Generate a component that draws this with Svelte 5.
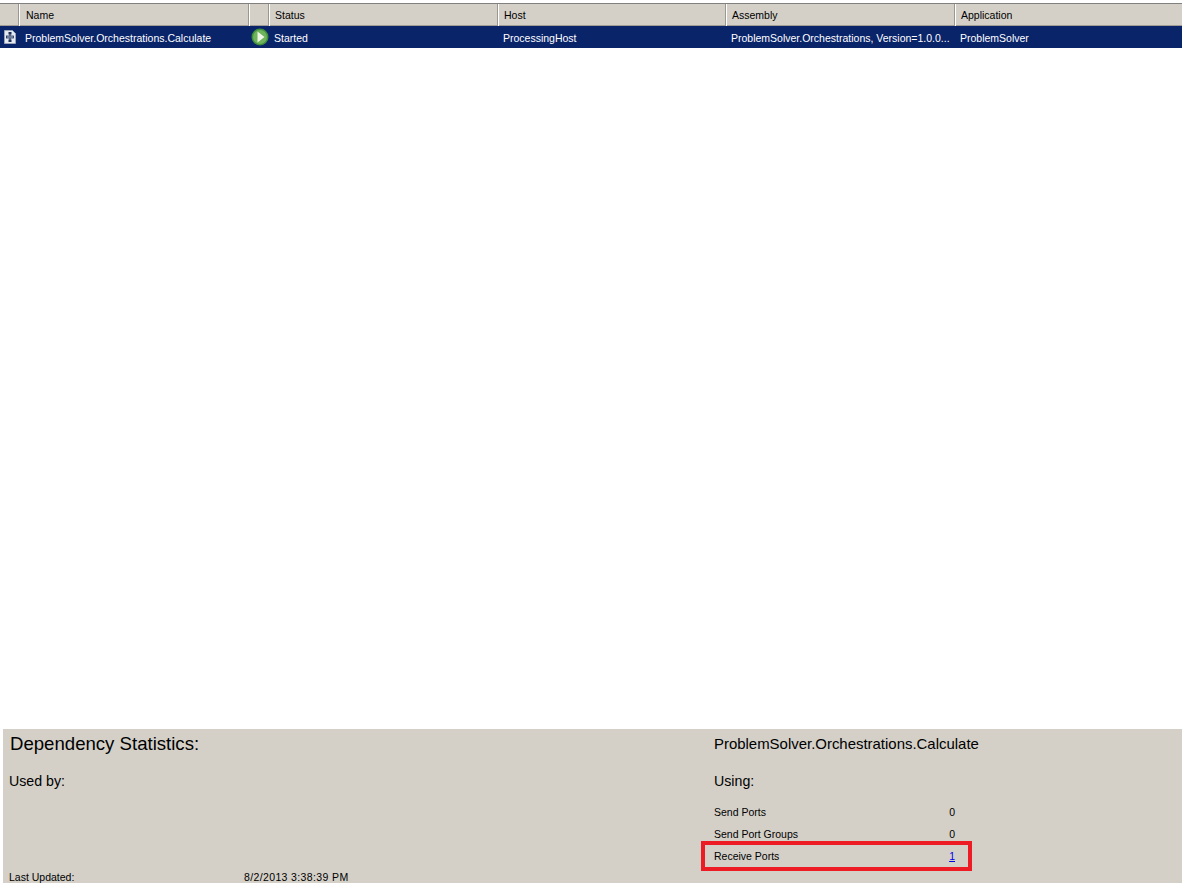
<script>
  const columns = ['', 'Name', '', 'Status', 'Host', 'Assembly', 'Application'];
  const usingStats = [
    { label: 'Send Ports', value: 0 },
    { label: 'Send Port Groups', value: 0 },
    { label: 'Receive Ports', value: 1, link: true }
  ];
</script>

<div class="console">
  <section class="list">
    <div class="head cols">
      {#each columns as col}
        <div class="col">{col}</div>
      {/each}
    </div>
    <div class="row cols">
      <div class="cell icon">
        <svg width="15" height="16" viewBox="0 0 15 16">
          <path d="M3.5 1.5H11.5L14.5 4.5V14.5H3.5Z" fill="#e4e9f2" stroke="#9aa4b8" />
          <path d="M9 3V13" stroke="#1c2c50" />
          <rect x="5.5" y="7" width="7" height="2" fill="#a9b5cc" stroke="#1c2c50" stroke-width=".8" />
          <rect x="7.5" y="3" width="3" height="2.5" fill="#1c2c50" />
          <rect x="7.5" y="10.5" width="3" height="2.5" fill="#1c2c50" />
        </svg>
      </div>
      <div class="cell">ProblemSolver.Orchestrations.Calculate</div>
      <div class="cell icon">
        <svg width="18" height="18" viewBox="0 0 18 18">
          <circle cx="9" cy="9" r="8.5" fill="#3f8f3a" />
          <circle cx="9" cy="9" r="7" fill="#6fb35c" />
          <path d="M6.5 3.5L13.5 9L6.5 14.5Z" fill="#eef5e6" />
        </svg>
      </div>
      <div class="cell">Started</div>
      <div class="cell">ProcessingHost</div>
      <div class="cell">ProblemSolver.Orchestrations, Version=1.0.0...</div>
      <div class="cell">ProblemSolver</div>
    </div>
  </section>

  <section class="stats">
    <div class="side">
      <h2>Dependency Statistics:</h2>
      <h3>Used by:</h3>
      <div class="updated">
        <span>Last Updated:</span>
        <span class="date">8/2/2013 3:38:39 PM</span>
      </div>
    </div>
    <div class="side using">
      <p class="title">ProblemSolver.Orchestrations.Calculate</p>
      <h3>Using:</h3>
      <ul>
        {#each usingStats as stat}
          <li class:marked={stat.link}>
            <span>{stat.label}</span>
            {#if stat.link}
              <a href="#receive">{stat.value}</a>
            {:else}
              <span>{stat.value}</span>
            {/if}
          </li>
        {/each}
      </ul>
    </div>
  </section>
</div>

<style>
  :global(body) {
    margin: 0;
    background: #fff;
  }

  .console {
    height: 883px;
    overflow: hidden;
    display: flex;
    flex-direction: column;
    font-family: "Liberation Sans", Arial, sans-serif;
    font-size: 10.5px;
    color: #000;
  }

  .list {
    flex: 1;
    padding-top: 3px;
  }

  .cols {
    display: grid;
    grid-template-columns: 20px 230px 20px 229px 228px 229px 1fr;
  }

  .head {
    height: 23px;
    box-sizing: border-box;
    background: #d4d0c8;
    border-top: 1px solid #808080;
    border-bottom: 1px solid #a09c94;
  }

  .col {
    line-height: 22px;
    padding-left: 5px;
    border-right: 1px solid #fff;
    box-shadow: inset -1px 0 0 #9a978f;
  }

  .col:nth-child(2) {
    padding-left: 6px;
  }

  .col:last-child {
    border-right: 0;
    box-shadow: none;
  }

  .row {
    height: 22px;
    background: #0a246a;
    color: #fff;
  }

  .cell {
    line-height: 24px;
    padding-left: 4px;
    white-space: nowrap;
    overflow: hidden;
  }

  .cell:nth-child(2) {
    padding-left: 5px;
  }

  .icon {
    padding-left: 1px;
    display: flex;
    align-items: center;
  }

  .stats {
    margin-left: 3px;
    height: 154px;
    background: #d4d0c8;
    display: grid;
    grid-template-columns: 705px 1fr;
    padding: 6px 0 0 6px;
    box-sizing: border-box;
  }

  h2 {
    margin: 0;
    padding-left: 1px;
    font-size: 18.6px;
    font-weight: 400;
    line-height: 17px;
    padding-bottom: 2px;
  }

  h3 {
    margin: 19px 0 0;
    font-size: 14.2px;
    font-weight: 400;
    line-height: 17px;
  }

  .using h3 {
    margin-top: 20px;
  }

  .title {
    margin: 0;
    font-size: 14.95px;
    line-height: 18px;
  }

  .updated {
    margin-top: 80px;
    display: grid;
    grid-template-columns: 235px 1fr;
    line-height: 14px;
  }

  .date {
    letter-spacing: 0.37px;
  }

  ul {
    list-style: none;
    margin: 11px 0 0;
    padding: 0;
    width: 241px;
  }

  li {
    position: relative;
    height: 22px;
    line-height: 22px;
    display: flex;
    justify-content: space-between;
  }

  .marked::after {
    content: "";
    position: absolute;
    left: -13px;
    right: -17px;
    top: -4px;
    bottom: -4px;
    border: 4px solid #ed1c24;
  }

  a {
    color: #0000ee;
  }
</style>
